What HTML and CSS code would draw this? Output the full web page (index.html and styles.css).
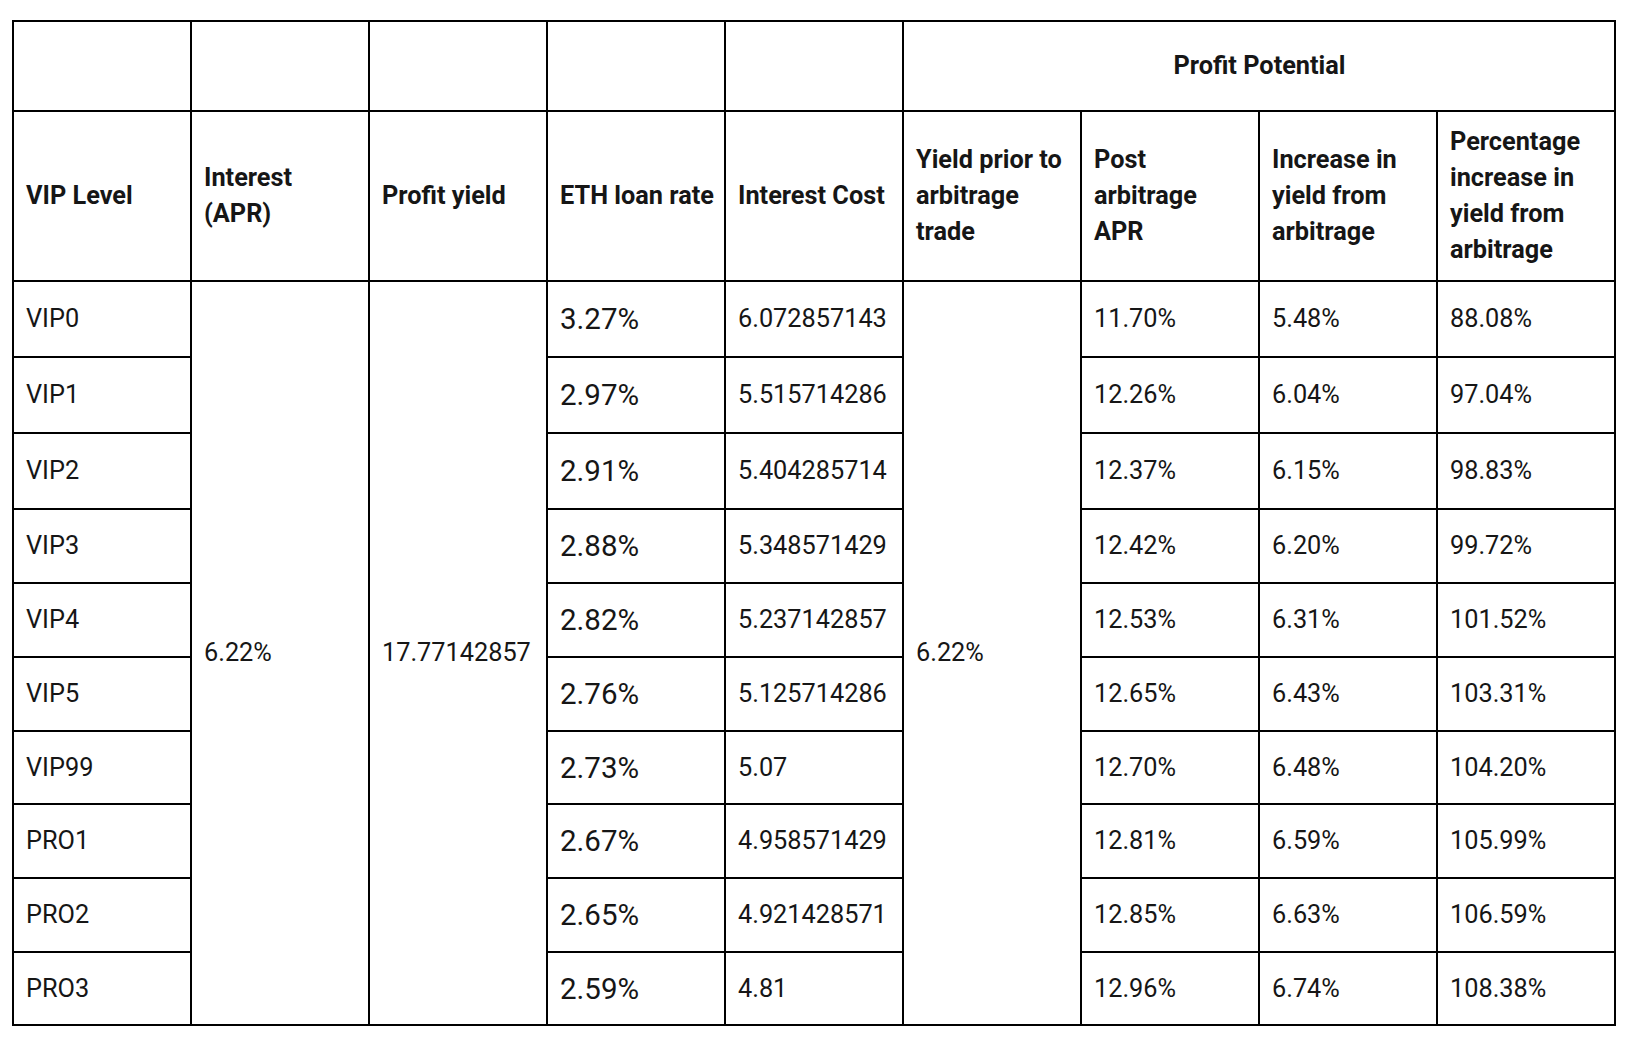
FILE: index.html
```html
<!DOCTYPE html>
<html lang="en">
<head>
<meta charset="utf-8">
<title>VIP Level Arbitrage Table</title>
<link rel="stylesheet" href="styles.css">
</head>
<body>
<table class="grid">
  <colgroup>
    <col class="c"><col class="c"><col class="c"><col class="c"><col class="c"><col class="c"><col class="c"><col class="c"><col class="c">
  </colgroup>
  <thead>
    <tr class="h1">
      <th></th><th></th><th></th><th></th><th></th>
      <th colspan="4" class="center">Profit Potential</th>
    </tr>
    <tr class="h2">
      <th>VIP Level</th>
      <th>Interest<br>(APR)</th>
      <th>Profit yield</th>
      <th class="nowrap">ETH loan rate</th>
      <th class="nowrap">Interest Cost</th>
      <th>Yield prior to arbitrage trade</th>
      <th>Post arbitrage APR</th>
      <th>Increase in yield from arbitrage</th>
      <th>Percentage increase in yield from arbitrage</th>
    </tr>
  </thead>
  <tbody>
    <tr class="r76"><td>VIP0</td><td rowspan="10">6.22%</td><td rowspan="10">17.77142857</td><td class="big">3.27%</td><td>6.072857143</td><td rowspan="10">6.22%</td><td>11.70%</td><td>5.48%</td><td>88.08%</td></tr>
    <tr class="r76"><td>VIP1</td><td class="big">2.97%</td><td>5.515714286</td><td>12.26%</td><td>6.04%</td><td>97.04%</td></tr>
    <tr class="r76"><td>VIP2</td><td class="big">2.91%</td><td>5.404285714</td><td>12.37%</td><td>6.15%</td><td>98.83%</td></tr>
    <tr class="r74"><td>VIP3</td><td class="big">2.88%</td><td>5.348571429</td><td>12.42%</td><td>6.20%</td><td>99.72%</td></tr>
    <tr class="r74"><td>VIP4</td><td class="big">2.82%</td><td>5.237142857</td><td>12.53%</td><td>6.31%</td><td>101.52%</td></tr>
    <tr class="r74"><td>VIP5</td><td class="big">2.76%</td><td>5.125714286</td><td>12.65%</td><td>6.43%</td><td>103.31%</td></tr>
    <tr class="r73"><td>VIP99</td><td class="big">2.73%</td><td>5.07</td><td>12.70%</td><td>6.48%</td><td>104.20%</td></tr>
    <tr class="r74"><td>PRO1</td><td class="big">2.67%</td><td>4.958571429</td><td>12.81%</td><td>6.59%</td><td>105.99%</td></tr>
    <tr class="r74"><td>PRO2</td><td class="big">2.65%</td><td>4.921428571</td><td>12.85%</td><td>6.63%</td><td>106.59%</td></tr>
    <tr class="r73"><td>PRO3</td><td class="big">2.59%</td><td>4.81</td><td>12.96%</td><td>6.74%</td><td>108.38%</td></tr>
  </tbody>
</table>
</body>
</html>
```
FILE: styles.css
```css
html, body {
  margin: 0;
  padding: 0;
  background: #ffffff;
}
body {
  padding: 20px 0 0 12px;
  font-family: Roboto, "Liberation Sans", sans-serif;
  color: #161616;
}
.grid {
  border-collapse: collapse;
  table-layout: fixed;
  width: 1604px;
  font-size: 25.3px;
  line-height: 36px;
}
.grid .c {
  width: 178px;
}
.grid th,
.grid td {
  border: 2px solid #000000;
  padding: 0 11px 0 12px;
  text-align: left;
  vertical-align: middle;
  font-weight: 400;
}
.grid th {
  font-weight: 700;
}
.grid th.center {
  text-align: center;
}
.grid th.nowrap {
  white-space: nowrap;
  padding-right: 0;
}
.h1 th { height: 88px; }
.h2 th { height: 168px; }
.r76 td { height: 74px; }
.r74 td { height: 72px; }
.r73 td { height: 71px; }
.grid td.big {
  font-size: 29.5px;
  padding-left: 12px;
}
```
